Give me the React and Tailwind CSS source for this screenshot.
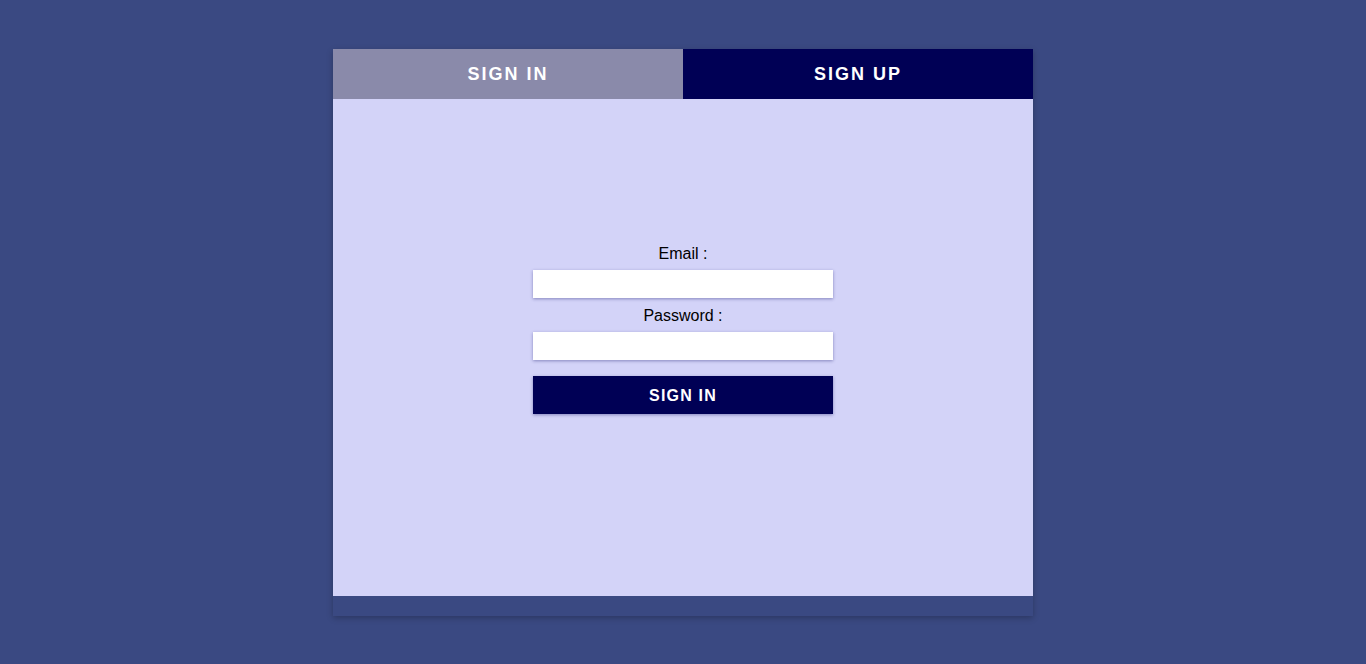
import { useState } from "react";

export default function App() {
  const [tab, setTab] = useState("signin");
  const [email, setEmail] = useState("");
  const [password, setPassword] = useState("");

  return (
    <div
      className="min-h-screen w-full bg-[#3a4982] pt-[49px]"
      style={{ fontFamily: '"Liberation Sans", Arial, sans-serif' }}
    >
      <div className="mx-auto w-[700px] bg-[#3a4982] shadow-[0_2px_6px_rgba(0,0,0,0.25)]">
        {/* Tabs */}
        <div className="flex h-[50px]">
          <button
            onClick={() => setTab("signin")}
            className="flex-1 bg-[#8a8aaa] text-white text-[18px] font-bold tracking-[2px]"
          >
            SIGN IN
          </button>
          <button
            onClick={() => setTab("signup")}
            className="flex-1 bg-[#000055] text-white text-[18px] font-bold tracking-[2px]"
          >
            SIGN UP
          </button>
        </div>

        {/* Form area */}
        <div className="h-[497px] bg-[#d3d3f8] pt-[145px]">
          <form
            onSubmit={(e) => e.preventDefault()}
            className="mx-auto flex w-[300px] flex-col text-center text-[16px] text-black"
          >
            <label className="leading-[20px]">Email :</label>
            <input
              type="email"
              value={email}
              onChange={(e) => setEmail(e.target.value)}
              className="mt-[6px] h-[28px] w-full bg-white px-2 outline-none shadow-[0_1px_3px_rgba(40,40,120,0.45)]"
            />
            <label className="mt-[8px] leading-[20px]">Password :</label>
            <input
              type="password"
              value={password}
              onChange={(e) => setPassword(e.target.value)}
              className="mt-[6px] h-[28px] w-full bg-white px-2 outline-none shadow-[0_1px_3px_rgba(40,40,120,0.45)]"
            />
            <button
              type="submit"
              className="mt-4 h-[38px] w-full bg-[#000055] pt-[2px] text-white text-[16px] font-bold tracking-[1.2px] shadow-[0_1px_3px_rgba(40,40,120,0.45)]"
            >
              SIGN IN
            </button>
          </form>
        </div>

        {/* Bottom strip */}
        <div className="h-[20px]" />
      </div>
    </div>
  );
}
